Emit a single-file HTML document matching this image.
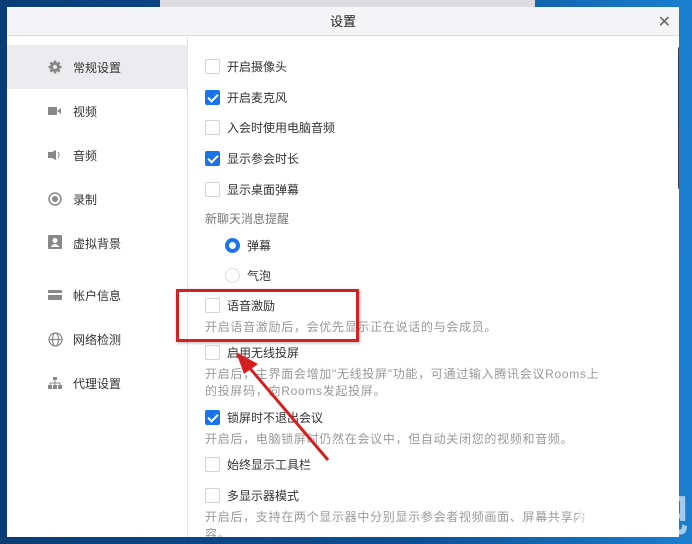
<!DOCTYPE html>
<html><head><meta charset="utf-8"><style>
*{margin:0;padding:0;box-sizing:border-box}
body{width:692px;height:544px;overflow:hidden;position:relative;background:linear-gradient(90deg,#0a3d75 0%,#0d4f95 60%,#1a7fd0 100%);font-family:"Liberation Sans","Noto Sans CJK SC",sans-serif}
.topwin{position:absolute;left:160px;top:0;width:375px;height:8px;background:#dcdce0}
.dlg{position:absolute;left:7px;top:7px;width:672px;height:530px;background:#fff;overflow:hidden}
.title{height:29px;background:#f5f5f7;border-bottom:1px solid #dcdcdf;text-align:center;font-size:13px;line-height:29px;color:#222}
.close{position:absolute;right:8px;top:5px;font-size:16px;color:#666}
.side{position:absolute;left:0;top:30px;width:181px;bottom:0;border-right:1px solid #e3e3e6}
.si{position:absolute;left:0;width:180px;height:44px;font-size:12px;color:#333}
.si span{position:absolute;left:66px;top:14px}
.si i{position:absolute;left:41px;top:16px;width:14px;height:12px}
.sel{background:#ececee}
.t{position:absolute;font-size:12px;color:#333;white-space:nowrap}
.d{position:absolute;font-size:12px;color:#999;white-space:nowrap;left:198px;letter-spacing:0.7px}
.cb{position:absolute;left:198px;width:15px;height:15px;border:1px solid #d4d4d8;border-radius:2px;background:#fff}
.cb.on{background:#1a73e8;border-color:#1a73e8}
.cb.on::after{content:"";position:absolute;left:4px;top:1px;width:4px;height:8px;border:solid #fff;border-width:0 2px 2px 0;transform:rotate(45deg)}
.sb{position:absolute;left:671px;top:40px;width:3px;height:142px;background:#3a3d48;border-radius:2px}
</style></head><body>
<div class="topwin"></div>
<div class="dlg">
<div class="title">设置</div><div class="close">✕</div>
<div class="side">
<div class="si sel" style="top:8px"><i style="top:15px"><svg width="14" height="14" viewBox="0 0 14 14"><circle cx="7" cy="7" r="5" fill="#888"/><g stroke="#888" stroke-width="2.4"><line x1="7" y1="0.5" x2="7" y2="13.5"/><line x1="0.5" y1="7" x2="13.5" y2="7"/><line x1="2.4" y1="2.4" x2="11.6" y2="11.6"/><line x1="11.6" y1="2.4" x2="2.4" y2="11.6"/></g><circle cx="7" cy="7" r="2" fill="#ececee"/></svg></i><span>常规设置</span></div>
<div class="si" style="top:52px"><i><svg width="14" height="12"><rect x="0" y="2" width="9" height="8" fill="#888"/><path d="M9 6 L13 3 V9 Z" fill="#888"/></svg></i><span>视频</span></div>
<div class="si" style="top:96px"><i><svg width="14" height="12"><rect x="0" y="3" width="4" height="6" fill="#888"/><path d="M4 3 L8 1 V11 L4 9Z" fill="#888"/><path d="M10 3 Q12 6 10 9" stroke="#888" fill="none"/></svg></i><span>音频</span></div>
<div class="si" style="top:140px"><i style="top:15px"><svg width="14" height="14"><circle cx="7" cy="7" r="6" stroke="#888" stroke-width="1.5" fill="none"/><circle cx="7" cy="7" r="3" fill="#888"/></svg></i><span>录制</span></div>
<div class="si" style="top:184px"><i style="top:14px"><svg width="14" height="14"><rect width="14" height="14" rx="1" fill="#888"/><circle cx="7" cy="5.5" r="2.5" fill="#fff"/><path d="M2.5 12 Q7 6 11.5 12Z" fill="#fff"/></svg></i><span>虚拟背景</span></div>
<div class="si" style="top:236px"><i><svg width="14" height="12"><rect y="1" width="14" height="10" rx="1" fill="#888"/><rect y="4" width="14" height="2" fill="#fff"/></svg></i><span>帐户信息</span></div>
<div class="si" style="top:280px"><i style="top:15px"><svg width="15" height="15"><g stroke="#888" fill="none" stroke-width="1.2"><circle cx="7.5" cy="7.5" r="6.5"/><ellipse cx="7.5" cy="7.5" rx="3" ry="6.5"/><line x1="1" y1="7.5" x2="14" y2="7.5"/></g></svg></i><span>网络检测</span></div>
<div class="si" style="top:324px"><i><svg width="14" height="12"><rect x="5" y="0" width="4" height="3" fill="#888"/><rect x="0" y="8" width="4" height="4" fill="#888"/><rect x="5" y="8" width="4" height="4" fill="#888"/><rect x="10" y="8" width="4" height="4" fill="#888"/><path d="M7 3V8M2 8V6H12V8" stroke="#888" fill="none"/></svg></i><span>代理设置</span></div>
</div>
<div class="cb" style="top:52px"></div><div class="t" style="left:220px;top:51px">开启摄像头</div>
<div class="cb on" style="top:83px"></div><div class="t" style="left:220px;top:82px">开启麦克风</div>
<div class="cb" style="top:113px"></div><div class="t" style="left:220px;top:112px">入会时使用电脑音频</div>
<div class="cb on" style="top:144px"></div><div class="t" style="left:220px;top:143px">显示参会时长</div>
<div class="cb" style="top:175px"></div><div class="t" style="left:220px;top:174px">显示桌面弹幕</div>
<div class="t" style="left:198px;top:203px;color:#777">新聊天消息提醒</div>
<div style="position:absolute;left:218px;top:231px;width:15px;height:15px;border-radius:50%;border:4px solid #1a73e8"></div><div class="t" style="left:240px;top:230px">弹幕</div>
<div style="position:absolute;left:218px;top:261px;width:15px;height:15px;border-radius:50%;border:1px solid #ddd"></div><div class="t" style="left:240px;top:260px">气泡</div>
<div class="cb" style="top:291px"></div><div class="t" style="left:220px;top:290px">语音激励</div>
<div class="d" style="top:311px">开启语音激励后，会优先显示正在说话的与会成员。</div>
<div class="cb" style="top:338px"></div><div class="t" style="left:220px;top:337px">启用无线投屏</div>
<div class="d" style="top:358px">开启后，主界面会增加"无线投屏"功能，可通过输入腾讯会议Rooms上</div>
<div class="d" style="top:375px">的投屏码，向Rooms发起投屏。</div>
<div class="cb on" style="top:403px"></div><div class="t" style="left:220px;top:402px">锁屏时不退出会议</div>
<div class="d" style="top:423px">开启后，电脑锁屏时仍然在会议中，但自动关闭您的视频和音频。</div>
<div class="cb" style="top:450px"></div><div class="t" style="left:220px;top:449px">始终显示工具栏</div>
<div class="cb" style="top:481px"></div><div class="t" style="left:220px;top:480px">多显示器模式</div>
<div class="d" style="top:501px">开启后，支持在两个显示器中分别显示参会者视频画面、屏幕共享内</div>
<div class="d" style="top:518px">容。</div>
<div class="sb"></div>
</div>
<div style="position:absolute;left:176px;top:289px;width:183px;height:53px;border:3px solid #d42020;box-shadow:1px 1px 3px rgba(0,0,0,.3)"></div>
<svg style="position:absolute;left:0;top:0" width="692" height="544"><line x1="328" y1="460" x2="248" y2="366" stroke="#d42020" stroke-width="3"/><path d="M236 352 L258 364 L244 374 Z" fill="#d42020"/></svg>
<div style="position:absolute;left:560px;top:480px;font-size:44px;color:rgba(255,255,255,.6);font-weight:bold;letter-spacing:-2px">下载吧</div>
</body></html>
